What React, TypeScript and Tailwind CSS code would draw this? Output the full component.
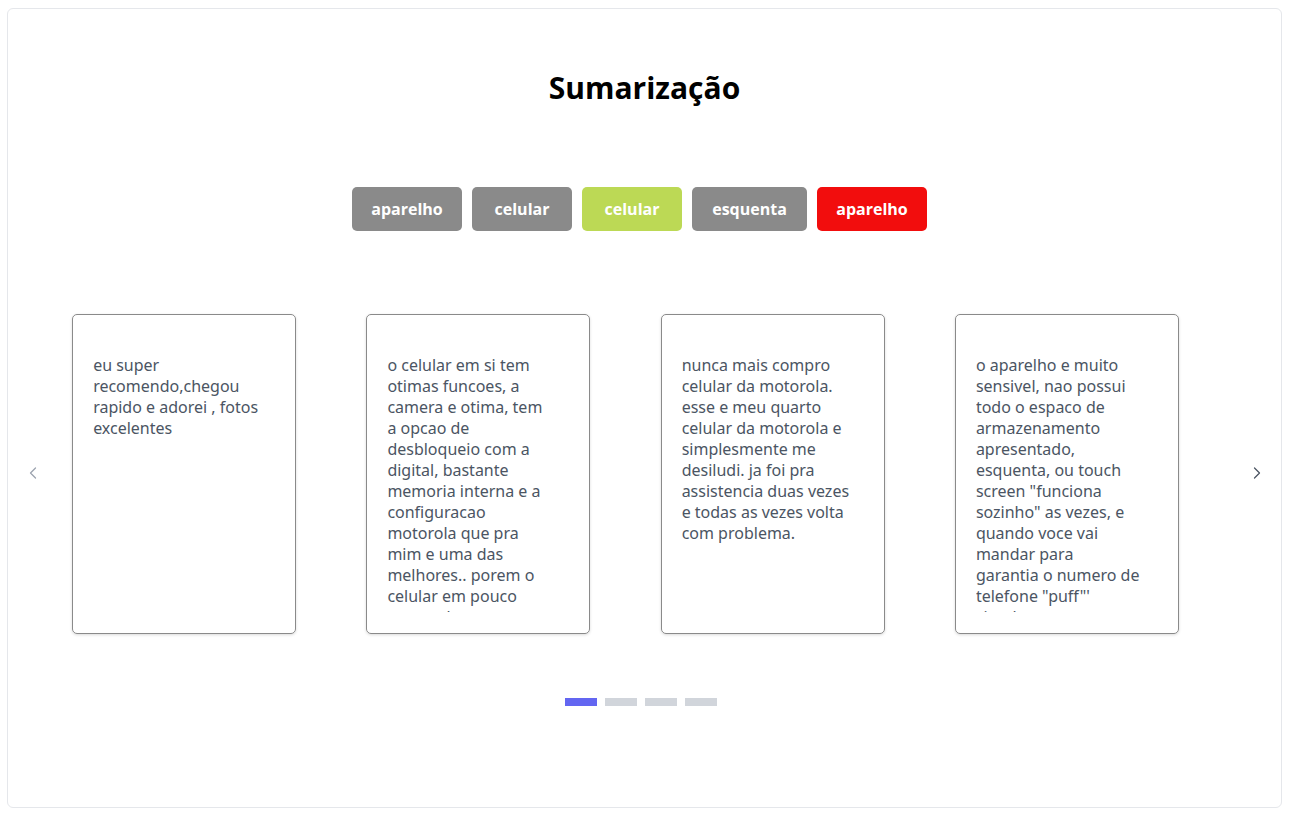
import { ChevronLeft, ChevronRight } from "lucide-react";

const TAGS = [
  { label: "aparelho", cls: "w-[110px] bg-[#8a8a8a]" },
  { label: "celular", cls: "w-[100px] bg-[#8a8a8a]" },
  { label: "celular", cls: "w-[100px] bg-[#bcd955]" },
  { label: "esquenta", cls: "w-[115px] bg-[#8a8a8a]" },
  { label: "aparelho", cls: "w-[110px] bg-[#f20d0d]" },
];

// lines kept as the carousel shows them
const REVIEWS = [
  ["eu super", "recomendo,chegou", "rapido e adorei , fotos", "excelentes"],
  [
    "o celular em si tem",
    "otimas funcoes, a",
    "camera e otima, tem",
    "a opcao de",
    "desbloqueio com a",
    "digital, bastante",
    "memoria interna e a",
    "configuracao",
    "motorola que pra",
    "mim e uma das",
    "melhores.. porem o",
    "celular em pouco",
    "tempo de uso",
  ],
  [
    "nunca mais compro",
    "celular da motorola.",
    "esse e meu quarto",
    "celular da motorola e",
    "simplesmente me",
    "desiludi. ja foi pra",
    "assistencia duas vezes",
    "e todas as vezes volta",
    "com problema.",
  ],
  [
    "o aparelho e muito",
    "sensivel, nao possui",
    "todo o espaco de",
    "armazenamento",
    "apresentado,",
    "esquenta, ou touch",
    "screen \"funciona",
    "sozinho\" as vezes, e",
    "quando voce vai",
    "mandar para",
    "garantia o numero de",
    "telefone \"puff\"'",
    "simplesmente nao",
  ],
];

export default function App() {
  return (
    <div className="bg-white min-h-[819px] pt-2 pl-[7px]">
      <div className="w-[1275px] h-[800px] border border-[#e5e7eb] rounded-md flex flex-col items-center">
        <h1 className="mt-[61px] text-[30px] leading-9 font-bold text-black font-['Open_Sans',sans-serif]">
          Sumarização
        </h1>

        <div className="mt-[81px] mr-[10px] flex gap-[10px]">
          {TAGS.map((t, i) => (
            <button
              key={i}
              className={`${t.cls} h-[44px] rounded-[5px] text-white text-[16px] font-bold font-['Open_Sans',sans-serif]`}
            >
              {t.label}
            </button>
          ))}
        </div>

        {/* carousel */}
        <div className="relative mt-[83px] w-full pl-[29px]">
          <button className="absolute left-[15px] top-[149px] text-[#9ca3af]">
            <ChevronLeft size={20} strokeWidth={1.5} />
          </button>
          <div className="flex w-[1177px]">
            {REVIEWS.map((lines, i) => (
              <div key={i} className="w-[294.25px] flex justify-center">
                <div className="w-[224px] h-[320px] border border-[#8a8a8a] rounded-[5px] shadow-[0_1px_3px_rgba(0,0,0,0.15)] px-5 pt-10 pb-5">
                  <div className="h-[257px] overflow-hidden text-[16px] leading-[21px] text-[#4b5563] font-['Noto_Sans',sans-serif] whitespace-nowrap">
                    {lines.map((l, j) => (
                      <div key={j}>{l}</div>
                    ))}
                  </div>
                </div>
              </div>
            ))}
          </div>
          <button className="absolute right-[14px] top-[149px] text-[#4b5563]">
            <ChevronRight size={20} strokeWidth={1.5} />
          </button>
        </div>

        <div className="mt-[64px] mr-[8px] flex gap-2">
          <span className="w-8 h-2 bg-[#6366f1]" />
          <span className="w-8 h-2 bg-[#d1d5db]" />
          <span className="w-8 h-2 bg-[#d1d5db]" />
          <span className="w-8 h-2 bg-[#d1d5db]" />
        </div>
      </div>
    </div>
  );
}
